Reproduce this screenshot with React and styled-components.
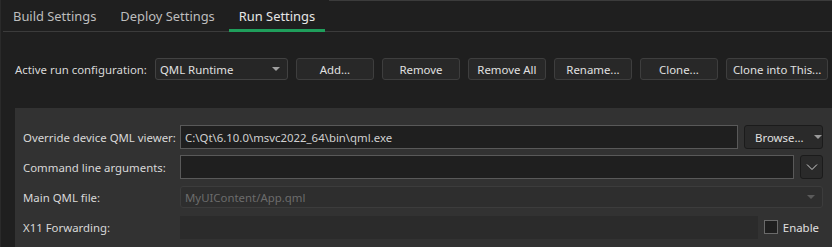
import React from "react";
import styled, { createGlobalStyle } from "styled-components";

const GlobalStyle = createGlobalStyle`
  html, body {
    margin: 0;
    padding: 0;
    background: #1f1f1f;
  }
  body {
    font-family: "Noto Sans", "Open Sans", sans-serif;
    font-size: 11.4px;
    color: #d4d4d4;
  }
`;

const Page = styled.div`
  width: 832px;
  height: 247px;
  overflow: hidden;
  box-sizing: border-box;
  border-left: 1px solid #2a2a2a;
  background: #1f1f1f;
  display: flex;
  flex-direction: column;
`;

const TabBar = styled.div`
  display: flex;
  height: 31px;
  margin-left: 2px;
  border-bottom: 1px solid #3b3b3b;
  flex-shrink: 0;
`;

const Tab = styled.div`
  display: flex;
  align-items: center;
  padding: 3px 10px 0;
  margin-right: 4px;
  margin-bottom: -1px;
  font-size: 12.9px;
  white-space: nowrap;
  color: ${(p) => (p.$active ? "#e6e6e6" : "#bdbdbd")};
  border-bottom: 3px solid ${(p) => (p.$active ? "#1f9e5b" : "transparent")};
`;

const TabFiller = styled.div`
  flex: 1;
  border-top: 1px solid #3b3b3b;
`;

const ConfigRow = styled.div`
  display: flex;
  align-items: center;
  gap: 8px;
  padding: 26px 0 0 14px;
  height: 22px;
`;

const Label = styled.span`
  white-space: nowrap;
  color: #d8d8d8;
`;

const Combo = styled.div`
  box-sizing: border-box;
  display: flex;
  align-items: center;
  justify-content: space-between;
  width: ${(p) => p.$width || "auto"};
  flex: ${(p) => (p.$grow ? 1 : "none")};
  height: 22px;
  padding: 0 7px 0 4px;
  border: 1px solid ${(p) => (p.$disabled ? "#3c3c3c" : "#424242")};
  border-radius: 3px;
  background: ${(p) => (p.$disabled ? "#2e2e2e" : "#262626")};
  color: ${(p) => (p.$disabled ? "#6c6c6c" : "#e0e0e0")};
  white-space: nowrap;
`;

const Arrow = styled.span`
  width: 0;
  height: 0;
  border-left: 4px solid transparent;
  border-right: 4px solid transparent;
  border-top: 4px solid ${(p) => p.$color || "#a0a0a0"};
`;

const Button = styled.button`
  box-sizing: border-box;
  height: 22px;
  min-width: 78px;
  padding: 0 6px;
  border: 1px solid #3e3e3e;
  border-radius: 3px;
  background: #282828;
  color: #e0e0e0;
  font-family: inherit;
  font-size: inherit;
  white-space: nowrap;
  display: flex;
  align-items: center;
  justify-content: center;
  gap: 10px;
`;

const Panel = styled.div`
  flex: 1;
  margin: 28px 0 0 14px;
  padding: 17px 9px 0 8px;
  background: #323232;
`;

const Form = styled.div`
  display: grid;
  grid-template-columns: 157px 1fr;
  grid-auto-rows: 24px;
  row-gap: 6px;
  align-items: center;
`;

const FieldRow = styled.div`
  display: flex;
  align-items: center;
  gap: 6px;
  height: 100%;
`;

const TextInput = styled.div`
  box-sizing: border-box;
  flex: 1;
  height: 24px;
  display: flex;
  align-items: center;
  padding: 0 4px;
  background: #1f1f1f;
  border: 1px solid #595959;
  color: #d0d0d0;
  white-space: nowrap;
`;

const BrowseButton = styled(Button)`
  height: 24px;
  width: 79px;
  border-color: #1b1b1b;
  background: #2a2a2a;
  padding: 0 6px 0 10px;
  justify-content: space-between;
`;

const IconButton = styled(Button)`
  height: 24px;
  width: 23px;
  min-width: 0;
  padding: 0;
  border-color: #1b1b1b;
  background: #2a2a2a;
`;

const EmptyField = styled.div`
  flex: 1;
  height: 23px;
  background: #2b2b2b;
`;

const Check = styled.label`
  display: flex;
  align-items: center;
  gap: 5px;
  color: #e0e0e0;
  padding-right: 4px;
`;

const Box = styled.span`
  box-sizing: border-box;
  width: 14px;
  height: 14px;
  border: 1px solid #6a6a6a;
  background: #1f1f1f;
`;

export default function App() {
  return (
    <>
      <GlobalStyle />
      <Page>
        <TabBar>
          <Tab>Build Settings</Tab>
          <Tab>Deploy Settings</Tab>
          <Tab $active>Run Settings</Tab>
          <TabFiller />
        </TabBar>

        <ConfigRow>
          <Label>Active run configuration:</Label>
          <Combo $width="133px">
            <span>QML Runtime</span>
            <Arrow />
          </Combo>
          <Button>Add...</Button>
          <Button>Remove</Button>
          <Button>Remove All</Button>
          <Button>Rename...</Button>
          <Button>Clone...</Button>
          <Button>Clone into This...</Button>
        </ConfigRow>

        <Panel>
          <Form>
            <Label>Override device QML viewer:</Label>
            <FieldRow>
              <TextInput>C:\Qt\6.10.0\msvc2022_64\bin\qml.exe</TextInput>
              <BrowseButton>
                <span>Browse...</span>
                <Arrow $color="#9a9a9a" />
              </BrowseButton>
            </FieldRow>

            <Label>Command line arguments:</Label>
            <FieldRow>
              <TextInput />
              <IconButton>
                <svg width="12" height="8" viewBox="0 0 12 8">
                  <path d="M1 1.5 L6 6.5 L11 1.5" fill="none" stroke="#d0d0d0" strokeWidth="1" />
                </svg>
              </IconButton>
            </FieldRow>

            <Label>Main QML file:</Label>
            <FieldRow>
              <Combo $grow $disabled>
                <span>MyUIContent/App.qml</span>
                <Arrow $color="#5a5a5a" />
              </Combo>
            </FieldRow>

            <Label>X11 Forwarding:</Label>
            <FieldRow>
              <EmptyField />
              <Check>
                <Box />
                Enable
              </Check>
            </FieldRow>
          </Form>
        </Panel>
      </Page>
    </>
  );
}
